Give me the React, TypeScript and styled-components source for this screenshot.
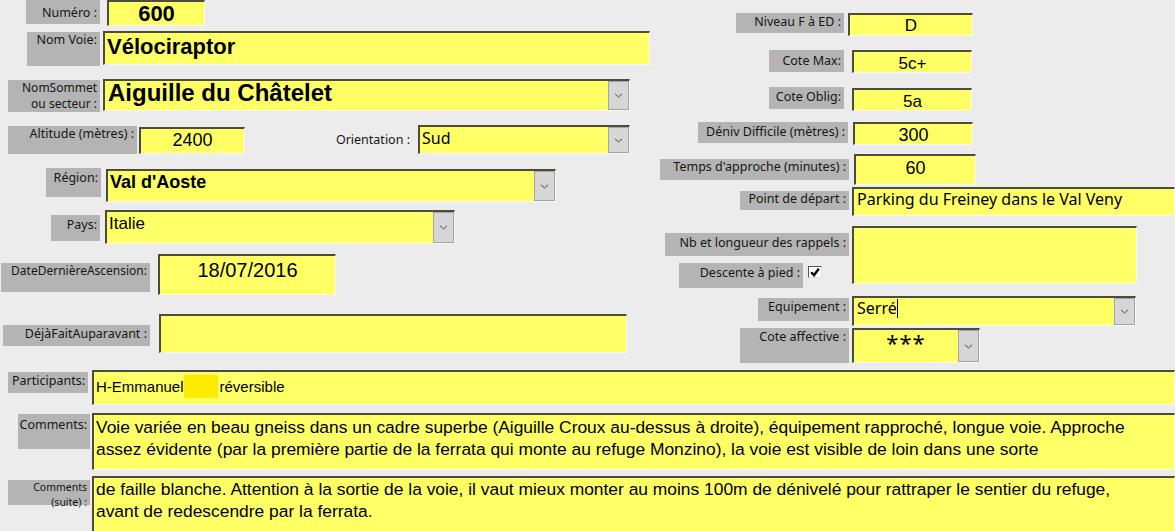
import React from "react";
import styled, { createGlobalStyle } from "styled-components";

const Global = createGlobalStyle`
  html, body { margin: 0; padding: 0; background: #ececec; }
  #root { width: 1175px; height: 531px; }
`;

const UI = `"Noto Sans", "DejaVu Sans", sans-serif`;
const ARIAL = `"Liberation Sans", Arial, sans-serif`;

type Box = { $w: number; $h: number; $ml?: number; $mt?: number };

const Form = styled.div`
  width: 1175px;
  height: 531px;
  overflow: hidden;
  background: #ececec;
  display: flex;
  flex-direction: column;
  font-family: ${UI};
`;

const Upper = styled.div`
  display: flex;
  height: 370px;
  flex-shrink: 0;
`;

const Column = styled.div<{ $w?: number }>`
  display: flex;
  flex-direction: column;
  ${(p) => (p.$w ? `width: ${p.$w}px; flex-shrink: 0;` : "flex: 1;")}
`;

const Row = styled.div<{ $h: number }>`
  display: flex;
  align-items: flex-start;
  height: ${(p) => p.$h}px;
  flex-shrink: 0;
`;

const Stack = styled.div<{ $w: number }>`
  display: flex;
  flex-direction: column;
  width: ${(p) => p.$w}px;
  flex-shrink: 0;
`;

const InlineRow = styled.div<{ $ml?: number; $mt?: number }>`
  display: flex;
  align-items: flex-start;
  margin-left: ${(p) => p.$ml ?? 0}px;
  margin-top: ${(p) => p.$mt ?? 0}px;
`;

const Label = styled.div<Box & { $pt?: number; $lh?: number; $fs?: number }>`
  box-sizing: border-box;
  width: ${(p) => p.$w}px;
  height: ${(p) => p.$h}px;
  margin-left: ${(p) => p.$ml ?? 0}px;
  margin-top: ${(p) => p.$mt ?? 0}px;
  padding: ${(p) => p.$pt ?? 1}px 3px 0 0;
  background: #b4b4b4;
  color: #161616;
  font-size: ${(p) => p.$fs ?? 12.5}px;
  line-height: ${(p) => p.$lh ?? 14}px;
  text-align: right;
  white-space: nowrap;
  flex-shrink: 0;
`;

const PlainLabel = styled.div<{ $w: number; $mt?: number }>`
  width: ${(p) => p.$w}px;
  margin-top: ${(p) => p.$mt ?? 0}px;
  color: #161616;
  font-size: 12.5px;
  line-height: 14px;
  text-align: right;
  white-space: nowrap;
  flex-shrink: 0;
`;

const Field = styled.div<Box>`
  box-sizing: border-box;
  width: ${(p) => p.$w}px;
  height: ${(p) => p.$h}px;
  margin-left: ${(p) => p.$ml ?? 0}px;
  margin-top: ${(p) => p.$mt ?? 0}px;
  background: #ffff66;
  border-top: 2px solid #4c4c3c;
  border-left: 2px solid #4c4c3c;
  border-right: 1px solid #f7f7f7;
  border-bottom: 1px solid #f7f7f7;
  display: flex;
  flex-shrink: 0;
  overflow: hidden;
`;

const Value = styled.div<{
  $size: number;
  $bold?: boolean;
  $ui?: boolean;
  $pt?: number;
  $pl?: number;
  $center?: boolean;
  $lh?: number;
  $ls?: number;
}>`
  flex: 1;
  min-width: 0;
  font-family: ${(p) => (p.$ui ? UI : ARIAL)};
  font-size: ${(p) => p.$size}px;
  font-weight: ${(p) => (p.$bold ? 700 : 400)};
  line-height: ${(p) => p.$lh ?? p.$size}px;
  letter-spacing: ${(p) => p.$ls ?? 0}px;
  padding-top: ${(p) => p.$pt ?? 0}px;
  padding-left: ${(p) => p.$pl ?? 0}px;
  text-align: ${(p) => (p.$center ? "center" : "left")};
  white-space: nowrap;
  color: #000;
`;

const Line = styled.div``;

const DropButton = styled.div`
  width: 21px;
  flex-shrink: 0;
  align-self: stretch;
  box-sizing: border-box;
  background: #d6d6d6;
  border: 1px solid #a4a4a4;
  display: flex;
  align-items: center;
  justify-content: center;
`;

const Highlight = styled.span`
  display: inline-block;
  width: 34px;
  height: 23px;
  margin: 0 2px 0 0;
  vertical-align: -6px;
  background: #ffea00;
`;

const Caret = styled.span`
  display: inline-block;
  width: 1px;
  height: 19px;
  vertical-align: -4px;
  background: #000;
`;

const Check = styled.div`
  box-sizing: border-box;
  width: 14px;
  height: 12px;
  margin-left: 5px;
  margin-top: 3px;
  background: #fff;
  border-top: 1px solid #555;
  border-left: 1px solid #555;
  border-right: 1px solid #ddd;
  border-bottom: 1px solid #ddd;
  display: flex;
  align-items: center;
  justify-content: center;
`;

const Chevron = () => (
  <svg width="9" height="5" viewBox="0 0 9 5">
    <path d="M1 0.8 L4.5 4 L8 0.8" fill="none" stroke="#4a4a4a" strokeWidth="1" />
  </svg>
);

const CheckMark = () => (
  <svg width="10" height="9" viewBox="0 0 10 9">
    <path d="M1.2 4.2 L4 7.2 L8.8 0.8" fill="none" stroke="#000" strokeWidth="2.4" />
  </svg>
);

export default function App() {
  return (
    <>
      <Global />
      <Form>
        <Upper>
          <Column $w={655}>
            <Row $h={31}>
              <Label $w={74} $h={24} $ml={26} $pt={6}>Numéro :</Label>
              <Field $w={98} $h={26} $ml={7}>
                <Value $size={22} $bold $center $pt={1}>600</Value>
              </Field>
            </Row>
            <Row $h={48}>
              <Label $w={73} $h={34} $ml={27} $mt={1}>Nom Voie:</Label>
              <Field $w={547} $h={34} $ml={3}>
                <Value $size={22} $bold $pt={3} $pl={2}>Vélociraptor</Value>
              </Field>
            </Row>
            <Row $h={46}>
              <Label $w={92} $h={32} $ml={8} $mt={1} $pt={0} $lh={16} $fs={12}>
                NomSommet
                <br />
                ou secteur :
              </Label>
              <Field $w={527} $h={32} $ml={3}>
                <Value $size={24} $bold $pt={0} $pl={3}>Aiguille du Châtelet</Value>
                <DropButton><Chevron /></DropButton>
              </Field>
            </Row>
            <Row $h={43}>
              <Label $w={129} $h={28} $ml={8} $mt={1} $pt={1}>Altitude (mètres) :</Label>
              <Field $w={106} $h={27} $ml={2} $mt={2}>
                <Value $size={18} $center $pt={2}>2400</Value>
              </Field>
              <PlainLabel $w={165} $mt={8}>Orientation :</PlainLabel>
              <Field $w={212} $h={29} $ml={8}>
                <Value $size={16} $ui $pt={3} $pl={2}>Sud</Value>
                <DropButton><Chevron /></DropButton>
              </Field>
            </Row>
            <Row $h={42}>
              <Label $w={55} $h={29} $ml={46} $pt={3}>Région:</Label>
              <Field $w={450} $h={33} $ml={5} $mt={1}>
                <Value $size={18} $bold $pt={2} $pl={2}>Val d'Aoste</Value>
                <DropButton><Chevron /></DropButton>
              </Field>
            </Row>
            <Row $h={44}>
              <Label $w={49} $h={26} $ml={51} $mt={5} $pt={3}>Pays:</Label>
              <Field $w={350} $h={34} $ml={5}>
                <Value $size={17} $pt={3} $pl={2}>Italie</Value>
                <DropButton><Chevron /></DropButton>
              </Field>
            </Row>
            <Row $h={60}>
              <Label $w={149} $h={29} $ml={1} $mt={9} $pt={1} $fs={12}>DateDernièreAscension:</Label>
              <Field $w={178} $h={41} $ml={8}>
                <Value $size={20} $center $pt={4}>18/07/2016</Value>
              </Field>
            </Row>
            <Row $h={56}>
              <Label $w={147} $h={21} $ml={3} $mt={11} $pt={2}>DéjàFaitAuparavant :</Label>
              <Field $w={468} $h={39} $ml={9} />
            </Row>
          </Column>

          <Column>
            <Row $h={50}>
              <Label $w={108} $h={20} $ml={81} $mt={13} $pt={2}>Niveau F à ED :</Label>
              <Field $w={125} $h={23} $ml={4} $mt={13}>
                <Value $size={17} $center $pt={2}>D</Value>
              </Field>
            </Row>
            <Row $h={37}>
              <Label $w={75} $h={22} $ml={114} $pt={4}>Cote Max:</Label>
              <Field $w={120} $h={23} $ml={8}>
                <Value $size={17} $center $pt={3}>5c+</Value>
              </Field>
            </Row>
            <Row $h={35}>
              <Label $w={75} $h={22} $ml={114} $pt={3}>Cote Oblig:</Label>
              <Field $w={120} $h={23} $ml={8} $mt={1}>
                <Value $size={17} $center $pt={3}>5a</Value>
              </Field>
            </Row>
            <Row $h={32}>
              <Label $w={150} $h={21} $ml={43} $pt={3}>Déniv Difficile (mètres) :</Label>
              <Field $w={120} $h={23} $ml={5}>
                <Value $size={18} $center $pt={2}>300</Value>
              </Field>
            </Row>
            <Row $h={33}>
              <Label $w={189} $h={21} $ml={5} $mt={5} $pt={1}>Temps d'approche (minutes) :</Label>
              <Field $w={122} $h={31} $ml={5}>
                <Value $size={18} $center $pt={3}>60</Value>
              </Field>
            </Row>
            <Row $h={39}>
              <Label $w={109} $h={19} $ml={85} $mt={4} $pt={1}>Point de départ :</Label>
              <Field $w={323} $h={29} $ml={3}>
                <Value $size={16} $ui $pt={2} $pl={3}>Parking du Freiney dans le Val Veny</Value>
              </Field>
            </Row>
            <Row $h={70}>
              <Stack $w={194}>
                <Label $w={184} $h={23} $ml={10} $mt={7} $pt={3}>Nb et longueur des rappels :</Label>
                <InlineRow $ml={24} $mt={7}>
                  <Label $w={124} $h={25} $pt={3}>Descente à pied :</Label>
                  <Check><CheckMark /></Check>
                </InlineRow>
              </Stack>
              <Field $w={285} $h={58} $ml={3} />
            </Row>
            <Row $h={32}>
              <Label $w={91} $h={23} $ml={103} $mt={2} $pt={2}>Equipement :</Label>
              <Field $w={284} $h={30} $ml={3}>
                <Value $size={16} $ui $pt={1} $pl={3}>
                  Serré<Caret />
                </Value>
                <DropButton><Chevron /></DropButton>
              </Field>
            </Row>
            <Row $h={42}>
              <Label $w={109} $h={35} $ml={85} $pt={2}>Cote affective :</Label>
              <Field $w={128} $h={35} $ml={3}>
                <Value $size={22} $ui $center $pt={1} $ls={1}>***</Value>
                <DropButton><Chevron /></DropButton>
              </Field>
            </Row>
          </Column>
        </Upper>

        <Row $h={43}>
          <Label $w={80} $h={21} $ml={8} $mt={2} $pt={2}>Participants:</Label>
          <Field $w={1083} $h={35} $ml={4}>
            <Value $size={15} $pt={3} $pl={2}>
              H-Emmanuel<Highlight />réversible
            </Value>
          </Field>
        </Row>
        <Row $h={63}>
          <Label $w={72} $h={35} $ml={18} $mt={1} $pt={4}>Comments:</Label>
          <Field $w={1083} $h={57} $ml={2}>
            <Value $size={17.4} $lh={22} $pt={1} $pl={2}>
              <Line>
                Voie variée en beau gneiss dans un cadre superbe (Aiguille Croux au-dessus à droite), équipement rapproché, longue voie. Approche
              </Line>
              <Line>
                assez évidente (par la première partie de la ferrata qui monte au refuge Monzino), la voie est visible de loin dans une sorte
              </Line>
            </Value>
          </Field>
        </Row>
        <Row $h={55}>
          <Label $w={82} $h={25} $ml={8} $mt={4} $pt={0} $lh={14.5} $fs={10.5}>
            Comments
            <br />
            (suite) :
          </Label>
          <Field $w={1083} $h={60} $ml={2}>
            <Value $size={17.4} $lh={22} $pt={0} $pl={2}>
              <Line>
                de faille blanche. Attention à la sortie de la voie, il vaut mieux monter au moins 100m de dénivelé pour rattraper le sentier du refuge,
              </Line>
              <Line>avant de redescendre par la ferrata.</Line>
            </Value>
          </Field>
        </Row>
      </Form>
    </>
  );
}
